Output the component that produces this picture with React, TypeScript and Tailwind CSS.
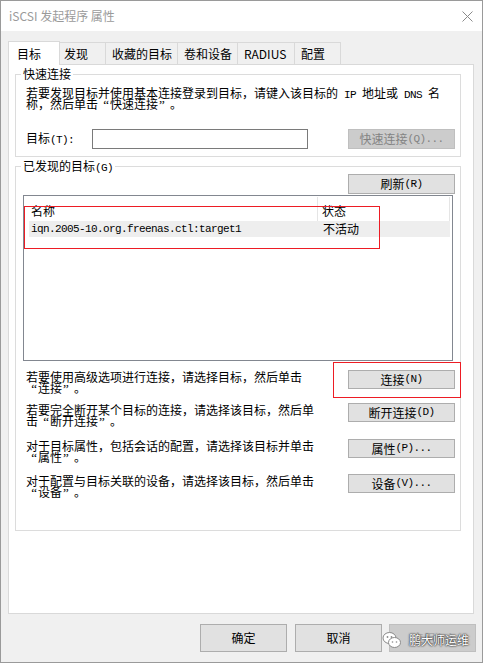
import React from 'react';

// splits a label into CJK runs and ASCII runs; ASCII drawn half-width, quotes full-width like SimSun
function Txt({ s }: { s: string }) {
  const parts = s.split(/([\x20-\x7e]+|“|”)/).filter((p) => p !== '');
  return (
    <>
      {parts.map((p, i) => {
        if (p === '“')
          return (
            <span key={i} className="inline-block w-[12px] pr-[1px] text-right font-['Liberation_Serif',serif] text-[13px]">
              “
            </span>
          );
        if (p === '”')
          return (
            <span key={i} className="inline-block w-[12px] pl-[1px] text-left font-['Liberation_Serif',serif] text-[13px]">
              ”
            </span>
          );
        if (/[\x20-\x7e]/.test(p))
          return (
            <span key={i} className="font-['Liberation_Mono',monospace] text-[11px] tracking-[-0.6px] whitespace-pre">
              {p}
            </span>
          );
        return <React.Fragment key={i}>{p}</React.Fragment>;
      })}
    </>
  );
}

function Line({ s }: { s: string }) {
  return (
    <div className="h-[11px] leading-[11px] whitespace-nowrap">
      <Txt s={s} />
    </div>
  );
}

interface BtnProps {
  label: string;
  disabled?: boolean;
  className?: string;
}

function Btn({ label, disabled, className = '' }: BtnProps) {
  return (
    <div
      className={`flex items-center justify-center border leading-none whitespace-nowrap ${
        disabled ? 'bg-[#cccccc] border-[#bfbfbf] text-[#838383]' : 'bg-[#e1e1e1] border-[#adadad] text-black'
      } ${className}`}
    >
      <Txt s={label} />
    </div>
  );
}

const tabs = [
  { name: '发现', w: 'w-[46px] pl-[4px]' },
  { name: '收藏的目标', w: 'w-[72px] pl-[6px]' },
  { name: '卷和设备', w: 'w-[60px] pl-[6px]' },
  { name: 'RADIUS', w: 'w-[57px] pl-[6px]' },
  { name: '配置', w: 'w-[46px] pl-[6px]' },
];

const actions = [
  { l1: '若要使用高级选项进行连接，请选择目标，然后单击', l2: '“连接”。', btn: '连接(N)', h: 'h-[33px]' },
  { l1: '若要完全断开某个目标的连接，请选择该目标，然后单', l2: '击“断开连接”。', btn: '断开连接(D)', h: 'h-[36px]' },
  { l1: '对于目标属性，包括会话的配置，请选择该目标并单击', l2: '“属性”。', btn: '属性(P)...', h: 'h-[35px]' },
  { l1: '对于配置与目标关联的设备，请选择该目标，然后单击', l2: '“设备”。', btn: '设备(V)...', h: 'h-[56px]' },
];

export default function App() {
  return (
    <div
      lang="zh-CN"
      className="relative w-[483px] h-[663px] border border-[#9a9a9a] bg-[#f0f0f0] font-['Noto_Sans_CJK_SC',sans-serif] text-[12px] text-black overflow-hidden"
    >
      {/* title bar */}
      <div className="h-[30px] bg-white flex items-center justify-between pl-[8px] pr-[9px]">
        <span className="text-[#9a9a9a] text-[12px]">iSCSI 发起程序 属性</span>
        <svg width="11" height="11" viewBox="0 0 11 11">
          <path d="M0.5 0.5 L10.5 10.5 M10.5 0.5 L0.5 10.5" stroke="#8a8a8a" strokeWidth="1" fill="none" />
        </svg>
      </div>

      <div className="pt-[10px] pl-[7px]">
        {/* tabs */}
        <div className="flex items-end h-[23px] leading-none">
          <div className="relative z-10 h-[24px] w-[52px] -mb-[1px] bg-white border-l border-r border-t border-[#d9d9d9] flex items-center pl-[8px]">
            目标
          </div>
          {tabs.map((t) => (
            <div
              key={t.name}
              className={`h-[22px] ${t.w} border-t border-r border-[#d9d9d9] flex items-center`}
            >
              {t.name}
            </div>
          ))}
        </div>

        {/* panel */}
        <div className="w-[466px] h-[550px] bg-white border border-[#d9d9d9] leading-none">
          <fieldset className="ml-[6px] mt-[2px] w-[446px] border border-[#dcdcdc] pl-[10px] pr-[5px] pb-[7px]">
            <legend className="-ml-[5px] px-[2px] h-[14px] leading-[14px]">快速连接</legend>
            <div className="mt-[6px]">
              <Line s="若要发现目标并使用基本连接登录到目标，请键入该目标的 IP 地址或 DNS 名" />
              <Line s="称，然后单击“快速连接”。" />
            </div>
            <div className="mt-[20px] h-[20px] flex items-center">
              <div className="w-[66px]">
                <Txt s="目标(T):" />
              </div>
              <div className="w-[216px] h-[20px] border border-[#7a7a7a] bg-white" />
              <Btn label="快速连接(Q)..." disabled className="ml-auto w-[107px] h-[20px]" />
            </div>
          </fieldset>

          <fieldset className="ml-[6px] mt-[2px] w-[446px] border border-[#dcdcdc] pl-[10px] pr-[5px]">
            <legend className="-ml-[5px] px-[2px] h-[14px] leading-[14px] whitespace-nowrap">
              <Txt s="已发现的目标(G)" />
            </legend>
            <div className="flex justify-end mt-[1px]">
              <Btn label="刷新(R)" className="w-[107px] h-[20px]" />
            </div>
            <div className="mt-[1px] -ml-[3px] w-[430px] h-[166px] border border-[#828790] bg-white pl-[5px] pt-[1px]">
              <div className="flex h-[24px] items-center">
                <div className="w-[289px] h-full flex items-center pl-[2px] pt-[3px] border-r border-[#e5e5e5]">名称</div>
                <div className="w-[132px] h-full flex items-center pl-[4px] pt-[3px] border-r border-[#e5e5e5]">状态</div>
              </div>
              <div className="flex h-[16px] w-[421px] items-center bg-[#eeeeee]">
                <div className="w-[289px] pl-[2px] font-['Liberation_Mono',monospace] text-[11px] tracking-[-0.6px]">
                  iqn.2005-10.org.freenas.ctl:target1
                </div>
                <div className="pl-[5px]">不活动</div>
              </div>
            </div>

            <div className="mt-[9px]">
              {actions.map((a) => (
                <div key={a.btn} className={`flex items-start ${a.h}`}>
                  <div className="mt-[1px]">
                    <Line s={a.l1} />
                    <Line s={a.l2} />
                  </div>
                  <Btn label={a.btn} className="ml-auto w-[107px] h-[19px]" />
                </div>
              ))}
            </div>
          </fieldset>
        </div>

        {/* dialog buttons */}
        <div className="mt-[10px] flex pl-[192px] leading-none">
          <Btn label="确定" className="w-[87px] h-[28px]" />
          <Btn label="取消" className="ml-[8px] w-[87px] h-[28px]" />
          <Btn label="应用(A)" disabled className="ml-[7px] w-[87px] h-[28px] text-[#a8a8a8]" />
        </div>
      </div>

      {/* annotations */}
      <div className="absolute left-[23px] top-[205px] w-[356px] h-[43px] border border-[#ed1c24]" />
      <div className="absolute left-[332px] top-[361px] w-[128px] h-[36px] border border-[#ed1c24]" />

      {/* watermark */}
      <div className="absolute left-[381px] top-[630px] flex items-center gap-[7px]">
        <svg width="20" height="18" viewBox="0 0 20 18">
          <ellipse cx="7.5" cy="7" rx="6.5" ry="5.5" fill="#ffffff" stroke="#8a8a8a" strokeWidth="1" />
          <ellipse cx="12.5" cy="11.5" rx="6" ry="5" fill="#ffffff" stroke="#8a8a8a" strokeWidth="1" />
          <circle cx="5.5" cy="6" r="0.9" fill="#8a8a8a" />
          <circle cx="9.5" cy="6" r="0.9" fill="#8a8a8a" />
          <circle cx="10.5" cy="11" r="0.8" fill="#8a8a8a" />
          <circle cx="14.5" cy="11" r="0.8" fill="#8a8a8a" />
        </svg>
        <span className="text-white text-[12px] leading-none [text-shadow:0_0_1px_#333,0_0_2px_#333,0_0_2px_#555]">
          鹏大师运维
        </span>
      </div>
    </div>
  );
}
